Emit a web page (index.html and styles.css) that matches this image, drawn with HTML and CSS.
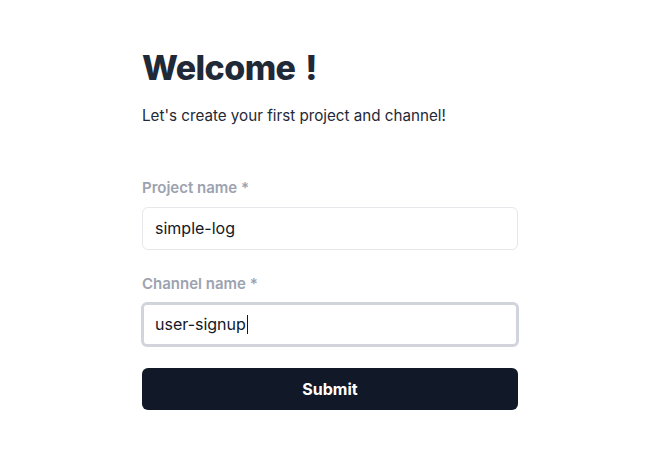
FILE: index.html
```html
<!DOCTYPE html>
<html>
<head>
<meta charset="utf-8">
<link rel="stylesheet" href="styles.css">
</head>
<body>
<main class="page">
  <div class="card">
    <h1 class="title">Welcome !</h1>
    <p class="subtitle">Let's create your first project and channel!</p>
    <form class="form">
      <div class="field">
        <label class="label">Project name *</label>
        <div class="input">simple-log</div>
      </div>
      <div class="field last">
        <label class="label">Channel name *</label>
        <div class="input focused">user-signup<span class="caret"></span></div>
      </div>
      <button type="button" class="submit">Submit</button>
    </form>
  </div>
</main>
</body>
</html>
```
FILE: styles.css
```css
* { box-sizing: border-box; }
html, body { margin: 0; padding: 0; background: #fff; }
body { font-family: Inter, "Noto Sans", sans-serif; color: #1f2937; }
.page { padding: 46px 0 0 142px; }
.card { width: 376px; display: flex; flex-direction: column; }
.title { margin: 0; font-size: 34px; font-weight: 800; line-height: 44px; color: #1f2937; letter-spacing: -0.6px; word-spacing: 3px; }
.subtitle { margin: 14px 0 0; font-size: 15.2px; line-height: 24px; color: #1f2937; }
.form { margin-top: 49px; display: flex; flex-direction: column; }
.field { display: flex; flex-direction: column; margin-bottom: 23px; }
.field.last { margin-bottom: 22px; }
.label { font-size: 15px; font-weight: 600; color: #9ca3af; line-height: 22px; margin-bottom: 8px; }
.input { height: 43px; border: 1px solid #e5e7eb; border-radius: 6px; padding: 0 12px; font-size: 16px; line-height: 41px; color: #111827; display: flex; align-items: center; }
.input.focused { border: 3px solid #d1d5db; margin: -1px -1px; height: 45px; padding: 0 11px; }
.caret { display: inline-block; width: 1px; height: 19px; background: #111827; margin-left: 1px; }
.submit { margin-top: 0; height: 42px; border: none; border-radius: 6px; background: #111827; color: #fff; font-family: Inter, sans-serif; font-size: 16px; font-weight: 700; }
```
